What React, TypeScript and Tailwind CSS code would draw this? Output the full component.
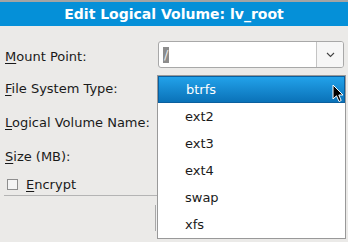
import React from 'react';

const font = { fontFamily: '"DejaVu Sans", Verdana, sans-serif' };

const options = ['btrfs', 'ext2', 'ext3', 'ext4', 'swap', 'xfs'];

function Label({ mnemonic, rest }: { mnemonic: string; rest: string }) {
  return (
    <span className="text-[13px] text-[#1a1a1a] leading-none">
      <span className="underline underline-offset-2">{mnemonic}</span>
      {rest}
    </span>
  );
}

function Cursor() {
  return (
    <svg width="12" height="19" viewBox="0 0 12 19" className="absolute left-[332px] top-[84px]">
      <path
        d="M1 1 L1 15 L4.5 11.8 L7 17.5 L9.2 16.5 L6.8 11 L11 11 Z"
        fill="#000"
        stroke="#fff"
        strokeWidth="1"
        strokeLinejoin="round"
      />
    </svg>
  );
}

export default function App() {
  return (
    <div
      className="relative w-[348px] h-[242px] overflow-hidden bg-[#ebeae8] flex flex-col"
      style={font}
    >
      <div className="h-[2px] bg-[#a4a4a4]" />
      <div className="h-[24px] bg-[#0590d8] flex items-center justify-center text-white font-bold text-[14px]">
        Edit Logical Volume: lv_root
      </div>

      <div className="flex flex-col pt-[15px] gap-[7px]">
        <div className="flex items-center h-[27px]">
          <div className="w-[158px] pl-[5px] pt-[2px]">
            <Label mnemonic="M" rest="ount Point:" />
          </div>
          <div className="flex h-[27px] w-[186px] rounded-[3px] border border-[#a8a8a8] bg-white overflow-hidden">
            <div className="flex-1 flex items-center pl-[4px]">
              <span className="bg-[#8c8c8c] text-[#e8e8e8] text-[13px] leading-[16px] px-[1px]">/</span>
            </div>
            <div className="w-[27px] border-l border-[#c4c4c4] bg-[#f6f6f6] flex items-center justify-center">
              <svg width="9" height="6" viewBox="0 0 9 6">
                <path d="M1 1 L4.5 4.5 L8 1" fill="none" stroke="#444" strokeWidth="1.1" />
              </svg>
            </div>
          </div>
        </div>

        <div className="flex items-center h-[27px] pl-[5px]">
          <Label mnemonic="F" rest="ile System Type:" />
        </div>
        <div className="flex items-center h-[27px] pl-[5px]">
          <Label mnemonic="L" rest="ogical Volume Name:" />
        </div>
        <div className="flex items-center h-[27px] pl-[5px]">
          <Label mnemonic="S" rest="ize (MB):" />
        </div>
      </div>

      <div className="flex items-center h-[20px] mt-[4px] pl-[7px] gap-[8px]">
        <div className="w-[11px] h-[11px] border border-[#8e8e8e] bg-[#f4f4f4]" />
        <Label mnemonic="E" rest="ncrypt" />
      </div>
      <div className="mx-[4px] mt-[1px] h-px bg-[#b4b4b4]" />

      <div className="flex pl-[155px] pt-[9px]">
        <div className="h-[26px] w-[120px] border-l border-[#a8a8a8] bg-[#f0f0f0]" />
      </div>

      <div className="absolute left-[157px] top-[75px] w-[189px] h-[164px] border border-[#999] bg-white flex flex-col">
        {options.map((o, i) => (
          <div
            key={o}
            className={
              i === 0
                ? 'h-[27px] flex items-center pl-[27px] text-[13px] text-white bg-gradient-to-b from-[#22a2ea] to-[#0a72b8] border border-[#0b5f9e]'
                : 'h-[27px] flex items-center pl-[27px] text-[13px] text-[#1a1a1a]'
            }
          >
            {o}
          </div>
        ))}
      </div>

      <Cursor />
    </div>
  );
}
